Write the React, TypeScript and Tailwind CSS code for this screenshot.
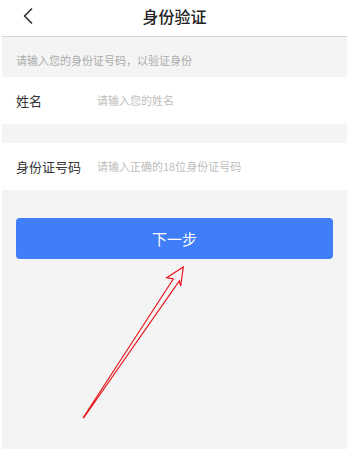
import React from 'react';

const font = { fontFamily: '"Noto Sans CJK SC", "Noto Sans", sans-serif' };

// One white input row: label on the left, placeholder after it.
const FieldRow: React.FC<{ label: string; placeholder: string }> = ({ label, placeholder }) => (
  <div className="flex h-[47px] items-center bg-white pl-[14px]">
    <span className="w-[81px] shrink-0 text-[13px] leading-none text-[#333]">{label}</span>
    <span className="text-[11px] leading-none text-[#bdbdbd]">{placeholder}</span>
  </div>
);

const App: React.FC = () => {
  return (
    <div className="relative h-[449px] w-[358px] overflow-hidden bg-white" style={font}>
      <div className="ml-[2px] flex h-full w-[345px] flex-col bg-[#f4f4f4]">
        {/* Header */}
        <div className="relative flex h-[37px] shrink-0 items-center justify-center border-b border-[#d4d4d4] bg-white">
          <svg className="absolute left-[19px] top-[7px]" width="14" height="18" viewBox="0 0 14 18" fill="none">
            <path d="M10.5 2 L3.5 9 L10.5 16" stroke="#333" strokeWidth="1.7" strokeLinecap="round" strokeLinejoin="round" />
          </svg>
          <span className="mb-[4px] text-[16px] font-medium leading-none text-[#222]">身份验证</span>
        </div>

        {/* Hint */}
        <div className="flex h-[40px] shrink-0 items-center pl-[14px] pt-[7px]">
          <span className="text-[11px] leading-none text-[#ababab]">请输入您的身份证号码，以验证身份</span>
        </div>

        <FieldRow label="姓名" placeholder="请输入您的姓名" />
        <div className="h-[19px] shrink-0" />
        <FieldRow label="身份证号码" placeholder="请输入正确的18位身份证号码" />

        {/* Button */}
        <div className="px-[14px] pt-[28px]">
          <button className="flex h-[41px] w-full items-center justify-center rounded-[4px] bg-[#3f7ef8] text-[15px] leading-none text-white">
            下一步
          </button>
        </div>
      </div>

      {/* Red annotation arrow */}
      <svg className="pointer-events-none absolute left-0 top-0" width="358" height="449" viewBox="0 0 358 449" fill="none">
        <path
          d="M83 418 L173.3 279 L166.7 277.7 L183.3 267 L180.7 286 L179.3 281 L83.6 418"
          stroke="#e8141c"
          strokeWidth="1.2"
          strokeLinejoin="miter"
        />
      </svg>
    </div>
  );
};

export default App;
